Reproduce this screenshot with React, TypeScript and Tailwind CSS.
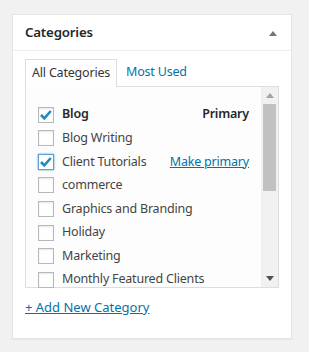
import React from "react";

const items: { label: string; checked?: boolean; bold?: boolean; focus?: boolean; right?: "primary" | "make" }[] = [
  { label: "Blog", checked: true, bold: true, right: "primary" },
  { label: "Blog Writing" },
  { label: "Client Tutorials", checked: true, focus: true, right: "make" },
  { label: "commerce" },
  { label: "Graphics and Branding" },
  { label: "Holiday" },
  { label: "Marketing" },
  { label: "Monthly Featured Clients" },
];

function Box({ checked, focus }: { checked?: boolean; focus?: boolean }) {
  return (
    <span
      className={
        focus
          ? "relative w-[16px] h-[16px] shrink-0 bg-white border border-[#5b9dd9] shadow-[0_0_2px_rgba(30,140,190,0.8)]"
          : "relative w-[16px] h-[16px] shrink-0 bg-white border border-[#b4b9be] shadow-[inset_0_1px_2px_rgba(0,0,0,0.1)]"
      }
    >
      {checked && (
        <svg viewBox="0 0 16 16" className="absolute left-[-1px] top-[-1px] w-[16px] h-[16px]">
          <path d="M3 8 L6.3 11.3 L12.8 4" fill="none" stroke="#1e8cbe" strokeWidth="2.6" strokeLinejoin="miter" />
        </svg>
      )}
    </span>
  );
}

export default function App() {
  return (
    <div
      className="w-[309px] h-[352px] bg-[#f1f1f1] pt-[14px] pl-[12px]"
      style={{ fontFamily: '"Noto Sans", "Open Sans", sans-serif' }}
    >
      <div className="w-[280px] h-[325px] bg-white border border-[#e5e5e5] shadow-[0_1px_1px_rgba(0,0,0,0.04)]">
        <div className="h-[36px] border-b border-[#eeeeee] flex items-center justify-between pl-[12px] pr-[13px]">
          <span className="text-[13.3px] tracking-[-0.2px] font-semibold text-[#23282d] leading-none">Categories</span>
          <svg viewBox="0 0 10 8" className="w-[10px] h-[8px]">
            <path d="M1 7 L5 2 L9 7 Z" fill="#72777c" />
          </svg>
        </div>
        <div className="px-[12px] pt-[7px]">
          <div className="flex items-end h-[28px] text-[12.5px] tracking-[-0.2px]">
            <div className="h-[28px] px-[6px] border border-[#dddddd] border-b-0 bg-white flex items-center text-[#32373c] relative z-10 -mb-px pb-px">
              All Categories
            </div>
            <div className="h-[27px] px-[9px] flex items-center text-[#0073aa]">Most Used</div>
          </div>
          <div className="h-[202px] border border-[#dddddd] bg-[#fdfdfd] flex">
            <div className="flex-1 pl-[12px] pr-[12px] pt-[16px]">
              {items.map((it) => (
                <div
                  key={it.label}
                  className="h-[23.57px] flex items-center text-[12.5px] tracking-[-0.2px] text-[#444444]"
                >
                  <Box checked={it.checked} focus={it.focus} />
                  <span className={"ml-[8px] whitespace-nowrap " + (it.bold ? "font-semibold text-[#23282d]" : "")}>
                    {it.label}
                  </span>
                  {it.right === "primary" && (
                    <span className="ml-auto font-semibold text-[#23282d]">Primary</span>
                  )}
                  {it.right === "make" && (
                    <span className="ml-auto text-[#0073aa] underline">Make primary</span>
                  )}
                </div>
              ))}
            </div>
            <div className="w-[17px] bg-[#f1f1f1] flex flex-col items-center">
              <div className="h-[17px] flex items-center justify-center">
                <svg viewBox="0 0 8 5" className="w-[8px] h-[5px]">
                  <path d="M0 5 L4 0 L8 5 Z" fill="#a3a3a3" />
                </svg>
              </div>
              <div className="w-[13px] h-[87px] bg-[#c1c1c1]" />
              <div className="flex-1" />
              <div className="h-[17px] flex items-center justify-center">
                <svg viewBox="0 0 8 5" className="w-[8px] h-[5px]">
                  <path d="M0 0 L4 5 L8 0 Z" fill="#505050" />
                </svg>
              </div>
            </div>
          </div>
          <div className="mt-[10px] text-[13px] text-[#0073aa] underline leading-[18px]">+ Add New Category</div>
        </div>
      </div>
    </div>
  );
}
